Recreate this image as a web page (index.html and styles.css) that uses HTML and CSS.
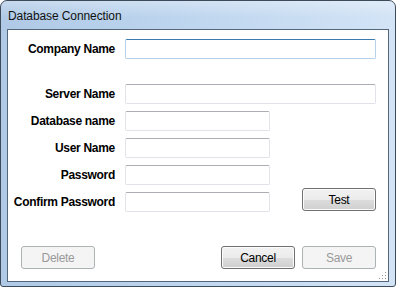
FILE: index.html
```html
<!DOCTYPE html>
<html lang="en">
<head>
  <meta charset="UTF-8" />
  <title>Database Connection</title>
  <link rel="stylesheet" href="styles.css">
</head>
<body>
  <div class="window">
    <div class="titlebar">Database Connection</div>

    <div class="client">
      <form class="fields">
        <label class="lbl" for="company">Company Name</label>
        <input class="txt wide focus" type="text" id="company" />

        <div class="spacer"></div>

        <label class="lbl" for="server">Server Name</label>
        <input class="txt wide" type="text" id="server" />

        <label class="lbl" for="dbname">Database name</label>
        <input class="txt" type="text" id="dbname" />

        <label class="lbl" for="user">User Name</label>
        <input class="txt" type="text" id="user" />

        <label class="lbl" for="pass">Password</label>
        <input class="txt" type="password" id="pass" />

        <label class="lbl" for="confirm">Confirm Password</label>
        <input class="txt" type="password" id="confirm" />
        <button class="btn test" type="button">Test</button>
      </form>

      <div class="actions">
        <button class="btn" type="button" disabled>Delete</button>
        <div class="grow"></div>
        <button class="btn" type="button">Cancel</button>
        <button class="btn" type="button" disabled>Save</button>
      </div>

      <!-- resize grip -->
      <svg class="grip" width="8" height="8" viewBox="0 0 8 8">
        <g fill="#fff">
          <rect x="7" y="1" width="1" height="1"/>
          <rect x="7" y="4" width="1" height="1"/>
          <rect x="4" y="4" width="1" height="1"/>
          <rect x="7" y="7" width="1" height="1"/>
          <rect x="4" y="7" width="1" height="1"/>
          <rect x="1" y="7" width="1" height="1"/>
        </g>
        <g fill="#9a9a9a">
          <rect x="6" y="0" width="1" height="1"/>
          <rect x="6" y="3" width="1" height="1"/>
          <rect x="3" y="3" width="1" height="1"/>
          <rect x="6" y="6" width="1" height="1"/>
          <rect x="3" y="6" width="1" height="1"/>
          <rect x="0" y="6" width="1" height="1"/>
        </g>
      </svg>
    </div>
  </div>
</body>
</html>
```

FILE: styles.css
```css
html, body {
  margin: 0;
  padding: 0;
}

body {
  width: 396px;
  height: 287px;
  font-family: 'Liberation Sans', Arial, sans-serif;
  background: #ffffff;
}

.window {
  box-sizing: border-box;
  width: 396px;
  height: 287px;
  border: 1px solid #3c4a5a;
  border-radius: 7px 7px 3px 3px;
  background: linear-gradient(to right, #afc9e6 0%, #bdd5ee 45%, #d3e4f6 100%);
  display: flex;
  flex-direction: column;
  overflow: hidden;
}

.titlebar {
  box-sizing: border-box;
  height: 28px;
  padding: 8px 0 0 7px;
  font-size: 12px;
  letter-spacing: -0.1px;
  color: #111;
  background: linear-gradient(to bottom, rgba(255,255,255,0.3), rgba(255,255,255,0) 60%);
}

.client {
  position: relative;
  box-sizing: border-box;
  height: 253px;
  margin: 0 6px;
  border: 1px solid #56667a;
  background: #ffffff;
  display: flex;
  flex-direction: column;
}

.fields {
  display: grid;
  grid-template-columns: 107px 10px 145px 32px 74px;
  grid-template-rows: 20px 11px 20px 20px 20px 20px 20px;
  row-gap: 7px;
  padding-top: 9px;
  margin: 0;
}

.lbl {
  grid-column: 1;
  text-align: right;
  align-self: center;
  font-size: 12px;
  font-weight: bold;
  letter-spacing: -0.3px;
  color: #000;
  white-space: nowrap;
}

.spacer {
  grid-column: 1 / -1;
}

.txt {
  grid-column: 3;
  box-sizing: border-box;
  height: 20px;
  width: 100%;
  margin: 0;
  padding: 0 3px;
  border: 1px solid #e2e3ea;
  border-top-color: #abadb3;
  border-radius: 2px;
  background: #fff;
  font-family: inherit;
  font-size: 12px;
  outline: none;
}

.txt.wide {
  grid-column: 3 / 6;
}

.txt.focus {
  border-color: #b5d0e8;
  border-top-color: #3d7bad;
}

.btn {
  box-sizing: border-box;
  width: 74px;
  height: 23px;
  margin: 0;
  padding: 0;
  border: 1px solid #707070;
  border-radius: 3px;
  background: linear-gradient(to bottom, #f2f2f2 0%, #ebebeb 50%, #dddddd 51%, #cfcfcf 100%);
  box-shadow: inset 0 0 0 1px #fcfcfc;
  font-family: inherit;
  font-size: 12px;
  letter-spacing: -0.3px;
  color: #000;
}

.btn:disabled {
  border-color: #adb2b5;
  background: #f4f4f4;
  box-shadow: none;
  color: #9a9a9a;
}

.test {
  grid-column: 5;
  grid-row: 7;
  align-self: start;
  margin-top: -4px;
}

.actions {
  display: flex;
  gap: 7px;
  margin-top: auto;
  padding: 0 12px 12px 13px;
}

.grow {
  flex: 1;
}

.grip {
  position: absolute;
  right: 1px;
  bottom: 1px;
}
```
